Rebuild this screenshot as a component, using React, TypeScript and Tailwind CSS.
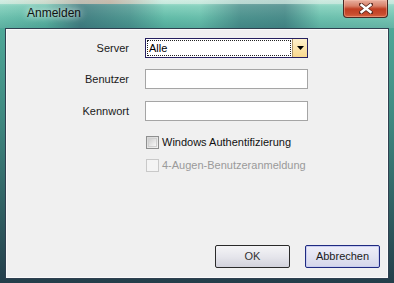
import React from "react";

const font = { fontFamily: '"Liberation Sans", Arial, sans-serif' };

function Checkbox({ disabled }: { disabled?: boolean }) {
  return (
    <div
      className={
        disabled
          ? "w-[13px] h-[13px] border border-[#c9c9c9] bg-[#f4f4f4] shrink-0"
          : "w-[13px] h-[13px] border border-[#8e8f8f] bg-[linear-gradient(135deg,#d6d6d6,#f4f4f4)] shrink-0 p-[1px]"
      }
    >
      {!disabled && <div className="w-full h-full border border-[#d0d0d0] bg-[linear-gradient(135deg,#cfcfcf,#f7f7f7)]" />}
    </div>
  );
}

export default function App() {
  return (
    <div
      className="w-[394px] h-[283px] flex flex-col px-[5px] pb-[4px] overflow-hidden bg-[linear-gradient(to_bottom,#c4eadc_0px,#82d0bc_6px,#5fbaa6_18px,#4fa898_28px,#3f8880_120px,#243e4a_283px)] relative"
      style={font}
    >
      {/* glass streaks */}
      <div className="absolute left-0 top-0 w-[394px] h-[28px] bg-[linear-gradient(to_right,rgba(255,255,255,0.08)_0px,rgba(40,70,95,0.05)_45px,rgba(40,70,95,0.5)_80px,rgba(40,70,95,0.3)_130px,rgba(255,255,255,0.02)_165px,rgba(255,255,255,0.05)_200px,rgba(40,70,95,0.35)_240px,rgba(40,70,95,0.4)_285px,rgba(255,255,255,0.08)_320px,rgba(255,255,255,0.12)_394px)]" />
      <div className="absolute left-0 top-0 w-[394px] h-[4px] bg-[linear-gradient(to_right,#d8efe6,#e6c4b0_110px,#d8efe6_160px,#cfe8e0_394px)] opacity-70" />
      <div className="relative h-[28px] flex items-start shrink-0">
        <div className="pl-[22px] pt-[5px] text-[12px] leading-[16px] text-[#111] [text-shadow:0_0_6px_rgba(255,255,255,0.9),0_0_10px_rgba(255,255,255,0.6)]">
          Anmelden
        </div>
        <div className="ml-auto mr-[1px] w-[45px] h-[18px] rounded-b-[4px] border border-t-0 border-[#4a2a24] bg-[linear-gradient(to_bottom,#e8b0a0_0px,#d88068_6px,#c03e22_9px,#c84c2e_14px,#de6e4a_18px)] flex items-center justify-center shadow-[inset_0_0_0_1px_rgba(255,200,180,0.4)]">
          <svg width="14" height="11" viewBox="0 0 14 11">
            <path d="M2 1.5 L12 9.5 M12 1.5 L2 9.5" stroke="#5a2a20" strokeWidth="4" strokeLinecap="square" />
            <path d="M2.5 2 L11.5 9 M11.5 2 L2.5 9" stroke="#ffffff" strokeWidth="2.4" strokeLinecap="square" />
          </svg>
        </div>
      </div>
      <div className="flex-1 border border-[#2f4050] bg-[#f0f0f0] flex flex-col shadow-[inset_0_0_0_1px_#fafafa]">
        <div className="flex flex-col pt-[9px]">
          <div className="flex items-center h-[20px]">
            <div className="w-[123px] text-right text-[11px] text-[#1a1a1a]">Server</div>
            <div className="ml-[16px] w-[163px] h-[20px] border border-[#262060] bg-white flex">
              <div className="flex-1 m-[1px] border border-dotted border-[#222] flex items-center pl-[1px] text-[11px] text-black">
                Alle
              </div>
              <div className="w-[15px] h-full border-l border-[#b0986a] bg-[linear-gradient(to_bottom,#fef1cd,#f8d88e)] flex items-center justify-center">
                <svg width="7" height="4" viewBox="0 0 7 4">
                  <path d="M0 0 H7 L3.5 4 Z" fill="#000" />
                </svg>
              </div>
            </div>
          </div>
          <div className="flex items-center h-[20px] mt-[11px]">
            <div className="w-[123px] text-right text-[11px] text-[#1a1a1a]">Benutzer</div>
            <div className="ml-[16px] w-[163px] h-[20px] border border-[#a5a5a5] bg-white" />
          </div>
          <div className="flex items-center h-[20px] mt-[12px]">
            <div className="w-[123px] text-right text-[11px] text-[#1a1a1a]">Kennwort</div>
            <div className="ml-[16px] w-[163px] h-[20px] border border-[#a5a5a5] bg-white" />
          </div>
          <div className="flex items-center h-[13px] mt-[15px] pl-[140px]">
            <Checkbox />
            <div className="ml-[3px] text-[11px] leading-[13px] text-[#111]">Windows Authentifizierung</div>
          </div>
          <div className="flex items-center h-[13px] mt-[10px] pl-[140px]">
            <Checkbox disabled />
            <div className="ml-[3px] text-[11px] leading-[13px] text-[#9a9a9a]">4-Augen-Benutzeranmeldung</div>
          </div>
        </div>
        <div className="mt-auto flex justify-end gap-[15px] pr-[8px] pb-[10px]">
          <div className="w-[75px] h-[23px] rounded-[2px] border border-[#2a2a2a] bg-[linear-gradient(to_bottom,#f4f4f6,#e6e6ec_50%,#d2d2dc)] flex items-center justify-center text-[11px] text-[#333]">
            OK
          </div>
          <div className="w-[75px] h-[23px] rounded-[2px] border border-[#1f2a80] bg-[linear-gradient(to_bottom,#eeeef8,#e2e3f2_50%,#d4d6ea)] shadow-[inset_0_0_0_1px_#c8ccf0] flex items-center justify-center text-[11px] text-[#1a1a1a]">
            Abbrechen
          </div>
        </div>
      </div>
    </div>
  );
}
